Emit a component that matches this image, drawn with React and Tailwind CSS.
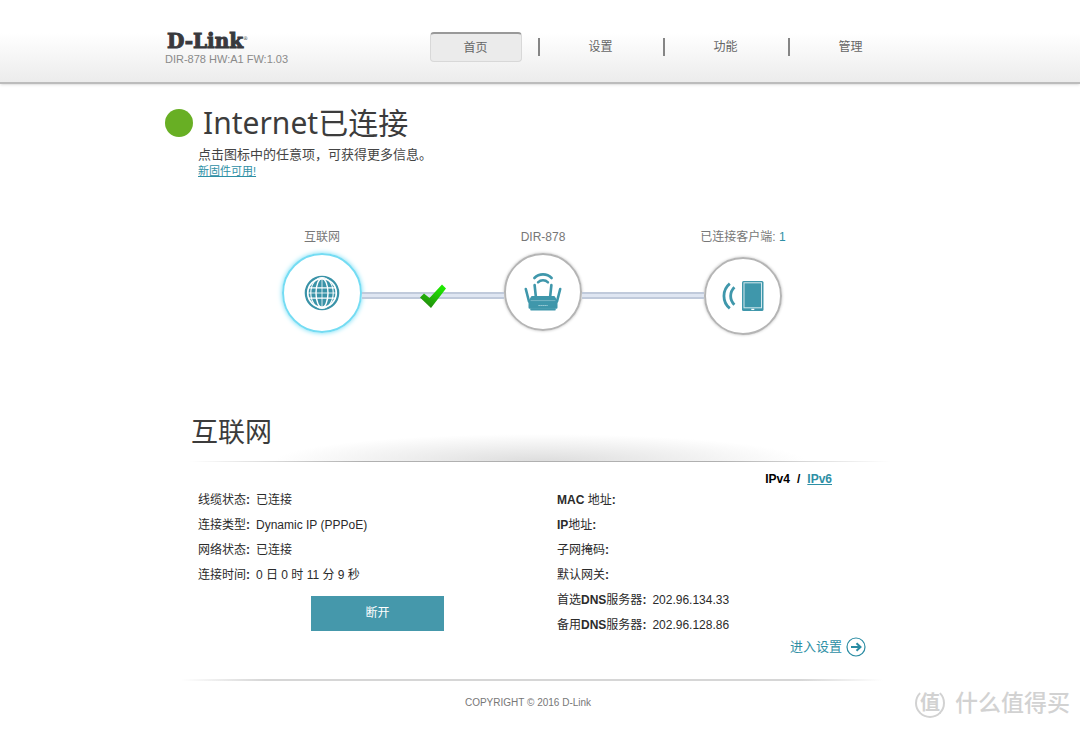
import { useState } from 'react';

const navItems = ['首页', '设置', '功能', '管理'];

const leftRows = [
  { id: 'cable', label: '线缆状态', value: '已连接' },
  { id: 'type', label: '连接类型', value: 'Dynamic IP (PPPoE)' },
  { id: 'network', label: '网络状态', value: '已连接' },
  { id: 'uptime', label: '连接时间', value: '0 日 0 时 11 分 9 秒' },
];

const rightRows = [
  { id: 'mac', label: <><b>MAC</b> 地址</>, value: '' },
  { id: 'ip', label: <><b>IP</b>地址</>, value: '' },
  { id: 'mask', label: '子网掩码', value: '' },
  { id: 'gateway', label: '默认网关', value: '' },
  { id: 'dns1', label: <>首选<b>DNS</b>服务器</>, value: '202.96.134.33' },
  { id: 'dns2', label: <>备用<b>DNS</b>服务器</>, value: '202.96.128.86' },
];

function GlobeIcon() {
  return (
    <svg viewBox="0 0 36 36" className="h-9 w-9" fill="none">
      <circle cx="18" cy="18" r="16.2" stroke="#3a93a8" strokeWidth="2.2" />
      <circle cx="18" cy="18" r="13.4" fill="#3a93a8" />
      <g stroke="#fff">
        <path d="M18 4v28M4 18h28" strokeWidth="0.8" />
        <path d="M5 12.8h26M5 23.2h26" strokeWidth="1.2" />
        <ellipse cx="18" cy="18" rx="6" ry="14.5" strokeWidth="1.4" />
        <ellipse cx="18" cy="18" rx="11.2" ry="15.5" strokeWidth="1.1" />
      </g>
    </svg>
  );
}

function RouterIcon() {
  return (
    <svg viewBox="0 0 38 40" className="h-10 w-[38px]" fill="none" stroke="#3f97ab" strokeLinecap="round">
      <path d="M10.4 6a12 12 0 0 1 17.2 0" strokeWidth="2.6" />
      <path d="M14 10.4a7 7 0 0 1 10 0" strokeWidth="2.4" />
      <path d="M10.6 13 12 26M27.4 13 26 26" strokeWidth="2.6" />
      <path d="M1.8 17 5 29.5M36.2 17 33 29.5" strokeWidth="2.6" />
      <path d="M8 25.2h22l2.3 4.3v6H5.7v-6z" fill="#3f97ab" strokeWidth="2.4" strokeLinejoin="round" />
      <path d="M7 28.6h24" stroke="#8fc3d0" strokeWidth="0.7" />
      <path d="M14.5 33.5h9" stroke="#b9dbe3" strokeWidth="1.2" strokeDasharray="1.2 0.8" strokeLinecap="butt" />
      <path d="M7.5 37.4h23" strokeWidth="2.4" />
    </svg>
  );
}

function ClientIcon() {
  return (
    <svg viewBox="0 0 42 32" className="h-8 w-[42px]" fill="none">
      <path d="M7.8 3.6C0 10 0 22 7.8 28.4" stroke="#3f97ab" strokeWidth="2.8" />
      <path d="M12.4 7.2c-5 5-5 12.6 0 17.6" stroke="#3f97ab" strokeWidth="2.8" />
      <rect x="20" y="1" width="21.5" height="30" rx="1.5" fill="#3f97ab" />
      <rect x="22" y="2.8" width="17.500" height="25" stroke="#d3e8ed" strokeWidth="1" />
      <path d="M29.3 29.4h3" stroke="#fff" strokeWidth="1.3" />
    </svg>
  );
}

function CheckMark() {
  return (
    <svg viewBox="0 0 26 24" className="absolute -top-2.5 left-1/2 h-6 w-[26px] -translate-x-1/2">
      <defs>
        <linearGradient id="check" x1="0" y1="1" x2="0.6" y2="0">
          <stop offset="0" stopColor="#257a10" />
          <stop offset="1" stopColor="#1ee800" />
        </linearGradient>
      </defs>
      <path d="M0 13.5 4 9.5l5.5 4.5L22 .5l4 4L11 24z" fill="url(#check)" />
    </svg>
  );
}

function ArrowCircle() {
  return (
    <svg viewBox="0 0 20 20" className="h-5 w-5" fill="none" stroke="#2a8ca3">
      <circle cx="10" cy="10" r="9" strokeWidth="1.2" />
      <path d="M5 10h9M10.5 6.2l4 3.8-4 3.8" strokeWidth="2" />
    </svg>
  );
}

function Connector({ className, children }) {
  return (
    <div className={`relative mt-[63px] h-[7px] border-y-2 border-[#c0cadb] bg-[#dfe6f2] ${className}`}>
      {children}
    </div>
  );
}

function InfoRow({ label, value }) {
  return (
    <div className="flex gap-1.5">
      <dt>{label}<b>:</b></dt>
      <dd>{value}</dd>
    </div>
  );
}

export default function App() {
  const [active, setActive] = useState('首页');

  return (
    <div className="relative min-h-screen bg-white font-['Liberation_Sans','Noto_Sans_CJK_SC',sans-serif] text-xs text-[#2b2b2b]">
      <header className="h-[84px] border-b-2 border-[#bcbcbc] bg-linear-to-b from-white from-40% to-[#ececec] shadow-sm">
        <div className="mx-auto flex max-w-[750px]">
          <div className="w-[248px] pt-[31px]">
            <div className="pl-0.5 font-['DejaVu_Serif',serif] text-xl/5 font-bold text-[#38393d] [-webkit-text-stroke:1px_#38393d]">
              D-Link
              <sup className="-top-2 text-[5px] font-normal [-webkit-text-stroke:0]">®</sup>
            </div>
            <p className="text-[11px]/4 text-[#8a8a8a]">DIR-878 HW:A1 FW:1.03</p>
          </div>
          <nav className="flex w-[500px] pt-8">
            {navItems.map((item, i) => (
              <div key={item} className="flex h-[30px] flex-1 items-center">
                {i > 0 && <span className="-mr-0.5 h-[18px] w-0.5 bg-[#858585]" />}
                <button
                  type="button"
                  onClick={() => setActive(item)}
                  className={`mx-auto h-[30px] w-[92px] rounded text-[#666] ${
                    active === item
                      ? 'border border-t-2 border-[#d8d8d8] border-t-[#999] bg-[#ebebeb]'
                      : ''
                  }`}
                >
                  {item}
                </button>
              </div>
            ))}
          </nav>
        </div>
      </header>

      <main className="mx-auto max-w-[750px] pt-[21px]">
        <div className="flex items-center gap-2.5">
          <span className="size-7 rounded-full bg-[#68af24]" />
          <h1 className="font-['Noto_Sans','Noto_Sans_CJK_SC',sans-serif] text-3xl/9 text-[#3c3c3c]">
            Internet已连接
          </h1>
        </div>
        <div className="pl-[33px]">
          <p className="mt-1 text-[13px]/5 text-[#444]">点击图标中的任意项，可获得更多信息。</p>
          <a href="#firmware" className="-mt-0.5 block w-fit text-[11px]/4 text-[#2e8fa5] underline">
            新固件可用!
          </a>
        </div>

        <div className="mt-[50px] ml-[117px] flex items-start text-[#777]">
          <button type="button" className="flex w-20 flex-col items-center gap-2">
            <span className="leading-4">互联网</span>
            <span className="flex size-20 items-center justify-center rounded-full border-2 border-[#74dcf3] shadow-[0_0_5px_#6cdcf5]">
              <GlobeIcon />
            </span>
          </button>
          <Connector className="w-[142px]">
            <CheckMark />
          </Connector>
          <button type="button" className="flex w-[78px] flex-col items-center gap-2">
            <span className="leading-4">DIR-878</span>
            <span className="flex size-[78px] items-center justify-center rounded-full border-2 border-[#b5b5b5] shadow-[0_0_3px_#bbb]">
              <RouterIcon />
            </span>
          </button>
          <Connector className="w-[122px]" />
          <button type="button" className="flex w-[78px] flex-col items-center gap-3">
            <span className="leading-4 whitespace-nowrap">
              已连接客户端: <span className="text-[#2e8fa5]">1</span>
            </span>
            <span className="flex size-[78px] items-center justify-center rounded-full border-2 border-[#b5b5b5] shadow-[0_0_3px_#bbb]">
              <ClientIcon />
            </span>
          </button>
        </div>

        <section className="mt-20 mr-6 ml-6">
          <div className="bg-[radial-gradient(ellipse_38%_28px_at_50%_100%,#dcdcdc,#ececec_45%,transparent)]">
            <h2 className="h-[46px] pl-0.5 text-[27px]/9 text-[#3c3c3c]">互联网</h2>
            <div className="h-px bg-[linear-gradient(to_right,transparent,#b0b0b0_25%,#b0b0b0_75%,transparent)]" />
          </div>
          <div className="mt-[9px] flex justify-end gap-[7px] pr-[59px] leading-4 font-bold text-black">
            <span>IPv4</span>
            <span>/</span>
            <a href="#ipv6" className="text-[#2e8fa5] underline">IPv6</a>
          </div>
          <div className="mt-px flex pl-[9px] leading-[25px]">
            <div className="w-[359px]">
              <dl>
                {leftRows.map((row) => (
                  <InfoRow key={row.id} label={row.label} value={row.value} />
                ))}
              </dl>
              <button type="button" className="mt-2 ml-[113px] block h-[35px] w-[133px] bg-[#4598ab] text-white">
                断开
              </button>
            </div>
            <dl className="flex-1">
              {rightRows.map((row) => (
                <InfoRow key={row.id} label={row.label} value={row.value} />
              ))}
            </dl>
          </div>
          <a href="#settings" className="-mt-px mr-[25px] ml-auto flex w-fit items-center gap-1 text-[13px]/5 text-[#2e8fa5]">
            进入设置
            <ArrowCircle />
          </a>
        </section>

        <footer className="mt-[22px] mr-6">
          <div className="mr-2 ml-4 h-0.5 bg-[linear-gradient(to_right,transparent,#d6d6d6_12%,#d6d6d6_88%,transparent)]" />
          <p className="mt-3.5 text-center text-[10px]/4 text-[#777]">COPYRIGHT © 2016 D-Link</p>
        </footer>
      </main>

      <div className="absolute right-2.5 bottom-2.5 flex items-center gap-2.5 text-[#d2d2d2]">
        <span className="flex size-[30px] items-center justify-center rounded-full border-2 border-[#d2d2d2] border-t-transparent text-xl font-bold">
          值
        </span>
        <span className="text-[23px]/8 font-medium">什么值得买</span>
      </div>
    </div>
  );
}
